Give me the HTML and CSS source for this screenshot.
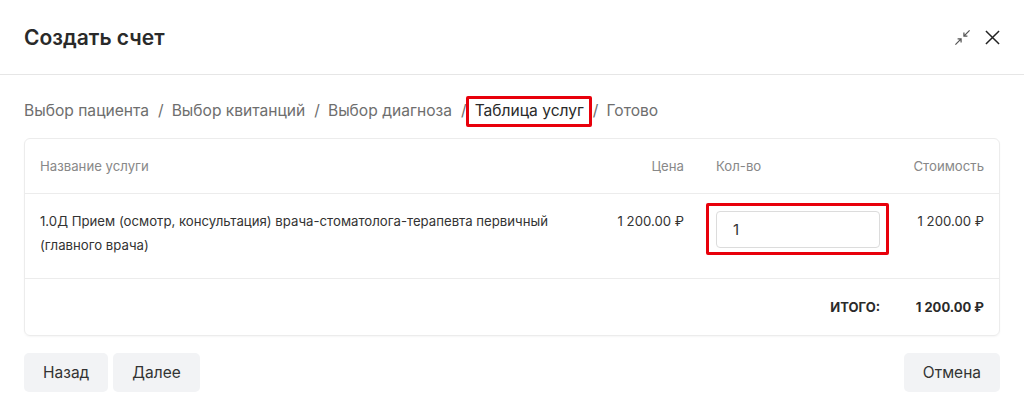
FILE: index.html
```html
<!DOCTYPE html>
<html lang="ru">
<head>
  <meta charset="UTF-8">
  <meta name="viewport" content="width=device-width, initial-scale=1.0">
  <title>Создать счет</title>
  <link rel="stylesheet" href="styles.css">
</head>
<body>
  <div class="modal">
    <div class="modal-header">
      <h2 class="modal-title">Создать счет</h2>
      <div class="modal-tools">
        <button class="icon-btn" title="Свернуть">
          <svg width="17" height="17" viewBox="0 0 18 18" fill="none" stroke="#555" stroke-width="1.3">
            <path d="M1.5 16.5 L7.5 10.5 M3.8 10.5 H7.5 V14.2"/>
            <path d="M16.5 1.5 L10.5 7.5 M10.5 3.8 V7.5 H14.2"/>
          </svg>
        </button>
        <button class="icon-btn" title="Закрыть">
          <svg width="15" height="15" viewBox="0 0 16 16" fill="none" stroke="#222" stroke-width="1.6">
            <path d="M1 1 L15 15 M15 1 L1 15"/>
          </svg>
        </button>
      </div>
    </div>

    <div class="modal-body">
      <div class="crumbs">
        <span class="crumb">Выбор пациента</span>
        <span class="sep">/</span>
        <span class="crumb">Выбор квитанций</span>
        <span class="sep">/</span>
        <span class="crumb">Выбор диагноза</span>
        <span class="sep">/</span>
        <span class="crumb active marked">Таблица услуг</span>
        <span class="sep">/</span>
        <span class="crumb">Готово</span>
      </div>

      <div class="services">
        <div class="row head">
          <div>Название услуги</div>
          <div class="right">Цена</div>
          <div>Кол-во</div>
          <div class="right">Стоимость</div>
        </div>
        <div class="row item">
          <div class="name">1.0Д Прием (осмотр, консультация) врача-стоматолога-терапевта первичный (главного врача)</div>
          <div class="right">1 200.00 ₽</div>
          <div><span class="qty marked"><input type="text" value="1"></span></div>
          <div class="right">1 200.00 ₽</div>
        </div>
        <div class="row total">
          <div></div>
          <div></div>
          <div class="right">ИТОГО:</div>
          <div class="right">1 200.00 ₽</div>
        </div>
      </div>

      <div class="actions">
        <button class="btn">Назад</button>
        <button class="btn">Далее</button>
        <button class="btn push">Отмена</button>
      </div>
    </div>
  </div>
</body>
</html>
```

FILE: styles.css
```css
body {
  margin: 0;
  font-family: Inter, "Noto Sans", sans-serif;
  color: #333;
  background: #fff;
}

.modal-header {
  height: 74px;
  display: flex;
  align-items: center;
  justify-content: space-between;
  padding: 0 24px;
  border-bottom: 1px solid #e6e6e6;
}

.modal-title {
  margin: 0;
  font-size: 21px;
  font-weight: 600;
  color: #2a2a2a;
}

.modal-tools {
  display: flex;
  align-items: center;
  gap: 14px;
}

.icon-btn {
  border: 0;
  background: none;
  padding: 0;
  display: flex;
  cursor: pointer;
}

.modal-body {
  padding: 24px 24px 0;
}

.crumbs {
  display: flex;
  align-items: center;
  line-height: 24px;
  font-size: 15.6px;
  color: #6e6e6e;
  margin-bottom: 15px;
}

.sep {
  margin: 0 8px 0 9px;
}

.crumb.active {
  color: #2a2a2a;
}

.marked {
  position: relative;
}

.crumb.marked::after {
  content: "";
  position: absolute;
  left: -9px;
  right: -8px;
  top: -3px;
  bottom: -4px;
  border: 3px solid #e8000b;
  border-radius: 2px;
}

.services {
  border: 1px solid #ececec;
  border-radius: 6px;
  box-shadow: 0 1px 2px rgba(0, 0, 0, 0.04);
}

.row {
  display: grid;
  grid-template-columns: 1fr 100px 164px 72px;
  column-gap: 32px;
  padding: 0 15px;
  font-size: 13.2px;
}

.row + .row {
  border-top: 1px solid #ececec;
}

.right {
  text-align: right;
}

.head {
  height: 54px;
  align-items: center;
  color: #888;
}

.item {
  height: 85px;
  padding-top: 15px;
  box-sizing: border-box;
  line-height: 24px;
  color: #333;
  align-items: start;
}

.qty {
  display: block;
  margin-top: 2px;
}

.qty::after {
  content: "";
  position: absolute;
  left: -10px;
  right: -9px;
  top: -8px;
  bottom: -7px;
  border: 3px solid #e8000b;
  border-radius: 2px;
}

.qty input {
  display: block;
  width: 100%;
  height: 37px;
  box-sizing: border-box;
  border: 1px solid #dcdcdc;
  border-radius: 4px;
  padding: 0 16px;
  font-family: inherit;
  font-size: 15px;
  color: #333;
  outline: none;
}

.total {
  height: 56px;
  align-items: center;
  font-weight: 700;
  font-size: 13px;
  color: #2a2a2a;
}

.actions {
  display: flex;
  gap: 5px;
  margin-top: 17px;
}

.btn {
  height: 39px;
  padding: 0 19px;
  border: 0;
  border-radius: 5px;
  background: #f2f3f5;
  font-family: inherit;
  font-size: 15.5px;
  color: #333;
  cursor: pointer;
}

.push {
  margin-left: auto;
}
```
